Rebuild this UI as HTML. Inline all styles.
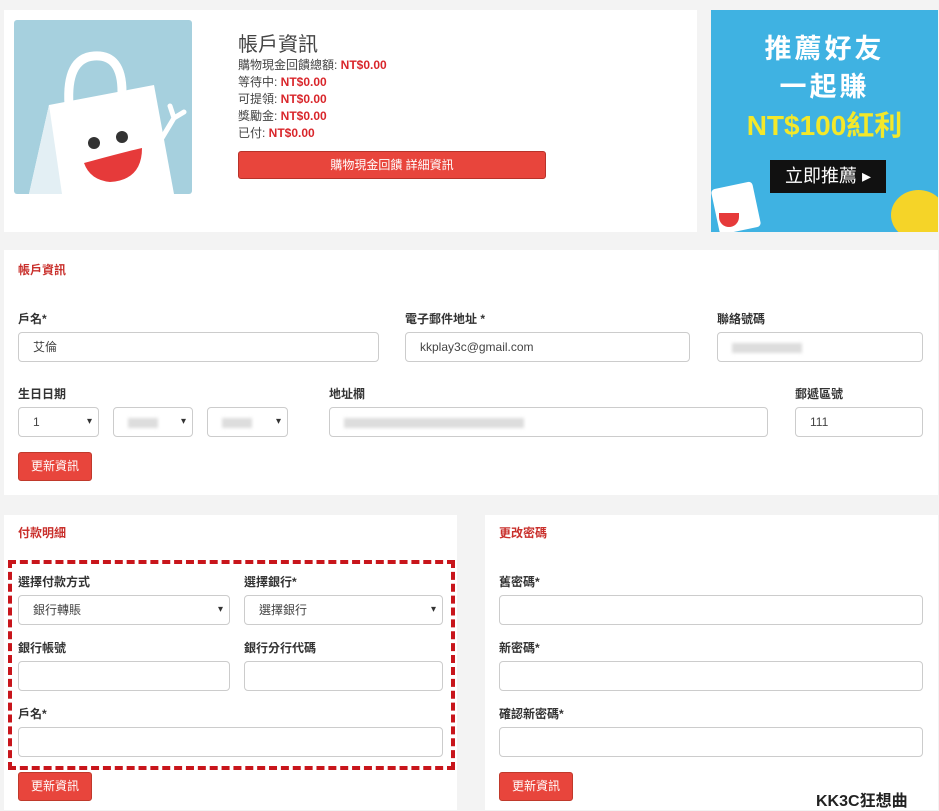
<!DOCTYPE html>
<html><head><meta charset="utf-8"><style>
*{box-sizing:border-box;margin:0;padding:0}
body{width:939px;height:810px;background:#f3f3f3;font-family:"Liberation Sans","Noto Sans CJK TC",sans-serif;font-size:12px;color:#333;position:relative;overflow:hidden}
.a{position:absolute}
.card{position:absolute;background:#fff}
.inp{position:absolute;height:30px;border:1px solid #ccc;border-radius:4px;background:#fff;font-size:12px;padding-left:14px;line-height:28px;color:#444}
.sel:after{content:"▾";position:absolute;right:6px;top:0;font-size:10px;color:#333}
.lbl{position:absolute;font-size:12px;font-weight:bold;color:#333}
.ttl{position:absolute;font-size:12px;font-weight:bold;color:#c9302c}
.btn{position:absolute;width:74px;height:29px;background:#e8453c;border:1px solid #c0392b;border-radius:3px;color:#fff;font-size:12px;text-align:center;line-height:27px}
.red{color:#d9262b;font-weight:bold}
.blur{display:inline-block;background:#ddd;height:10px;vertical-align:middle;filter:blur(1.5px)}
</style></head><body>
<div class="card" style="left:4px;top:10px;width:693px;height:222px"></div>
<div class="a" style="left:14px;top:20px;width:178px;height:174px;background:#a6d0de;border-radius:3px;overflow:hidden">
<svg width="178" height="174"><path d="M35 85 L140 65 L160 174 L15 174 Z" fill="#fff"/><path d="M15 174 L35 85 L48 174Z" fill="#e3eff4"/><path d="M55 85 Q52 38 80 36 Q108 34 108 72" stroke="#fff" stroke-width="9" fill="none"/><circle cx="80" cy="123" r="6" fill="#333"/><circle cx="108" cy="117" r="6" fill="#333"/><path d="M70 143 Q110 132 128 128 Q128 160 96 162 Q76 160 70 143Z" fill="#e63a3a"/><path d="M148 118 L160 98 M160 98 L156 86 M160 98 L170 92" stroke="#fff" stroke-width="5" stroke-linecap="round" fill="none"/></svg></div>
<div class="a" style="left:238px;top:28px;font-size:20px;color:#444">帳戶資訊</div>
<div class="a" style="left:238px;top:57px;line-height:17px;font-size:12px;color:#444">購物現金回饋總額: <span class="red">NT$0.00</span><br>等待中: <span class="red">NT$0.00</span><br>可提領: <span class="red">NT$0.00</span><br>獎勵金: <span class="red">NT$0.00</span><br>已付: <span class="red">NT$0.00</span></div>
<div class="a" style="left:238px;top:151px;width:308px;height:28px;background:#e8453c;border:1px solid #b8322a;border-radius:3px;color:#fff;text-align:center;line-height:26px">購物現金回饋 詳細資訊</div>
<div class="a" style="left:711px;top:10px;width:227px;height:222px;background:#3fb2e2;overflow:hidden;text-align:center;color:#fff">
<div style="margin-top:20px;font-size:27px;font-weight:bold;letter-spacing:3px;line-height:38px">推薦好友<br>一起賺</div>
<div style="font-size:28px;font-weight:bold;color:#f3e82a;line-height:40px">NT$100紅利</div>
<div style="position:absolute;left:59px;top:150px;width:116px;height:33px;background:#111;font-size:18px;line-height:33px">立即推薦 ▸</div>
<div style="position:absolute;left:4px;top:175px;width:42px;height:46px;background:#fff;border-radius:4px;transform:rotate(-12deg)"></div>
<div style="position:absolute;left:8px;top:203px;width:20px;height:14px;background:#e63a3a;border-radius:0 0 10px 10px"></div>
<div style="position:absolute;left:180px;top:180px;width:55px;height:50px;background:#f5d428;border-radius:50%"></div></div>

<div class="card" style="left:4px;top:250px;width:934px;height:245px"></div>
<div class="ttl" style="left:18px;top:261px">帳戶資訊</div>
<div class="lbl" style="left:18px;top:310px">戶名*</div><div class="inp" style="left:18px;top:332px;width:361px">艾倫</div>
<div class="lbl" style="left:405px;top:310px">電子郵件地址 *</div><div class="inp" style="left:405px;top:332px;width:285px">kkplay3c@gmail.com</div>
<div class="lbl" style="left:717px;top:310px">聯絡號碼</div><div class="inp" style="left:717px;top:332px;width:206px"><span class="blur" style="width:70px"></span></div>
<div class="lbl" style="left:18px;top:385px">生日日期</div>
<div class="inp sel" style="left:18px;top:407px;width:81px">1</div>
<div class="inp sel" style="left:113px;top:407px;width:80px"><span class="blur" style="width:30px"></span></div>
<div class="inp sel" style="left:207px;top:407px;width:81px"><span class="blur" style="width:30px"></span></div>
<div class="lbl" style="left:329px;top:385px">地址欄</div><div class="inp" style="left:329px;top:407px;width:439px"><span class="blur" style="width:180px"></span></div>
<div class="lbl" style="left:795px;top:385px">郵遞區號</div><div class="inp" style="left:795px;top:407px;width:128px">111</div>
<div class="btn" style="left:18px;top:452px">更新資訊</div>

<div class="card" style="left:4px;top:515px;width:453px;height:295px"></div>
<div class="ttl" style="left:18px;top:524px">付款明細</div>
<div class="a" style="left:8px;top:560px;width:447px;height:210px;border:4px dashed #c8151b"></div>
<div class="lbl" style="left:18px;top:573px">選擇付款方式</div><div class="inp sel" style="left:18px;top:595px;width:212px">銀行轉賬</div>
<div class="lbl" style="left:244px;top:573px">選擇銀行*</div><div class="inp sel" style="left:244px;top:595px;width:199px">選擇銀行</div>
<div class="lbl" style="left:18px;top:639px">銀行帳號</div><div class="inp" style="left:18px;top:661px;width:212px"></div>
<div class="lbl" style="left:244px;top:639px">銀行分行代碼</div><div class="inp" style="left:244px;top:661px;width:199px"></div>
<div class="lbl" style="left:18px;top:705px">戶名*</div><div class="inp" style="left:18px;top:727px;width:425px"></div>
<div class="btn" style="left:18px;top:772px">更新資訊</div>

<div class="card" style="left:485px;top:515px;width:453px;height:295px"></div>
<div class="ttl" style="left:499px;top:524px">更改密碼</div>
<div class="lbl" style="left:499px;top:573px">舊密碼*</div><div class="inp" style="left:499px;top:595px;width:424px"></div>
<div class="lbl" style="left:499px;top:639px">新密碼*</div><div class="inp" style="left:499px;top:661px;width:424px"></div>
<div class="lbl" style="left:499px;top:705px">確認新密碼*</div><div class="inp" style="left:499px;top:727px;width:424px"></div>
<div class="btn" style="left:499px;top:772px">更新資訊</div>
<div class="a" style="left:816px;top:787px;font-size:16px;font-weight:bold;color:#222;text-shadow:0 0 2px #fff,0 0 2px #fff">KK3C狂想曲</div>
</body></html>
